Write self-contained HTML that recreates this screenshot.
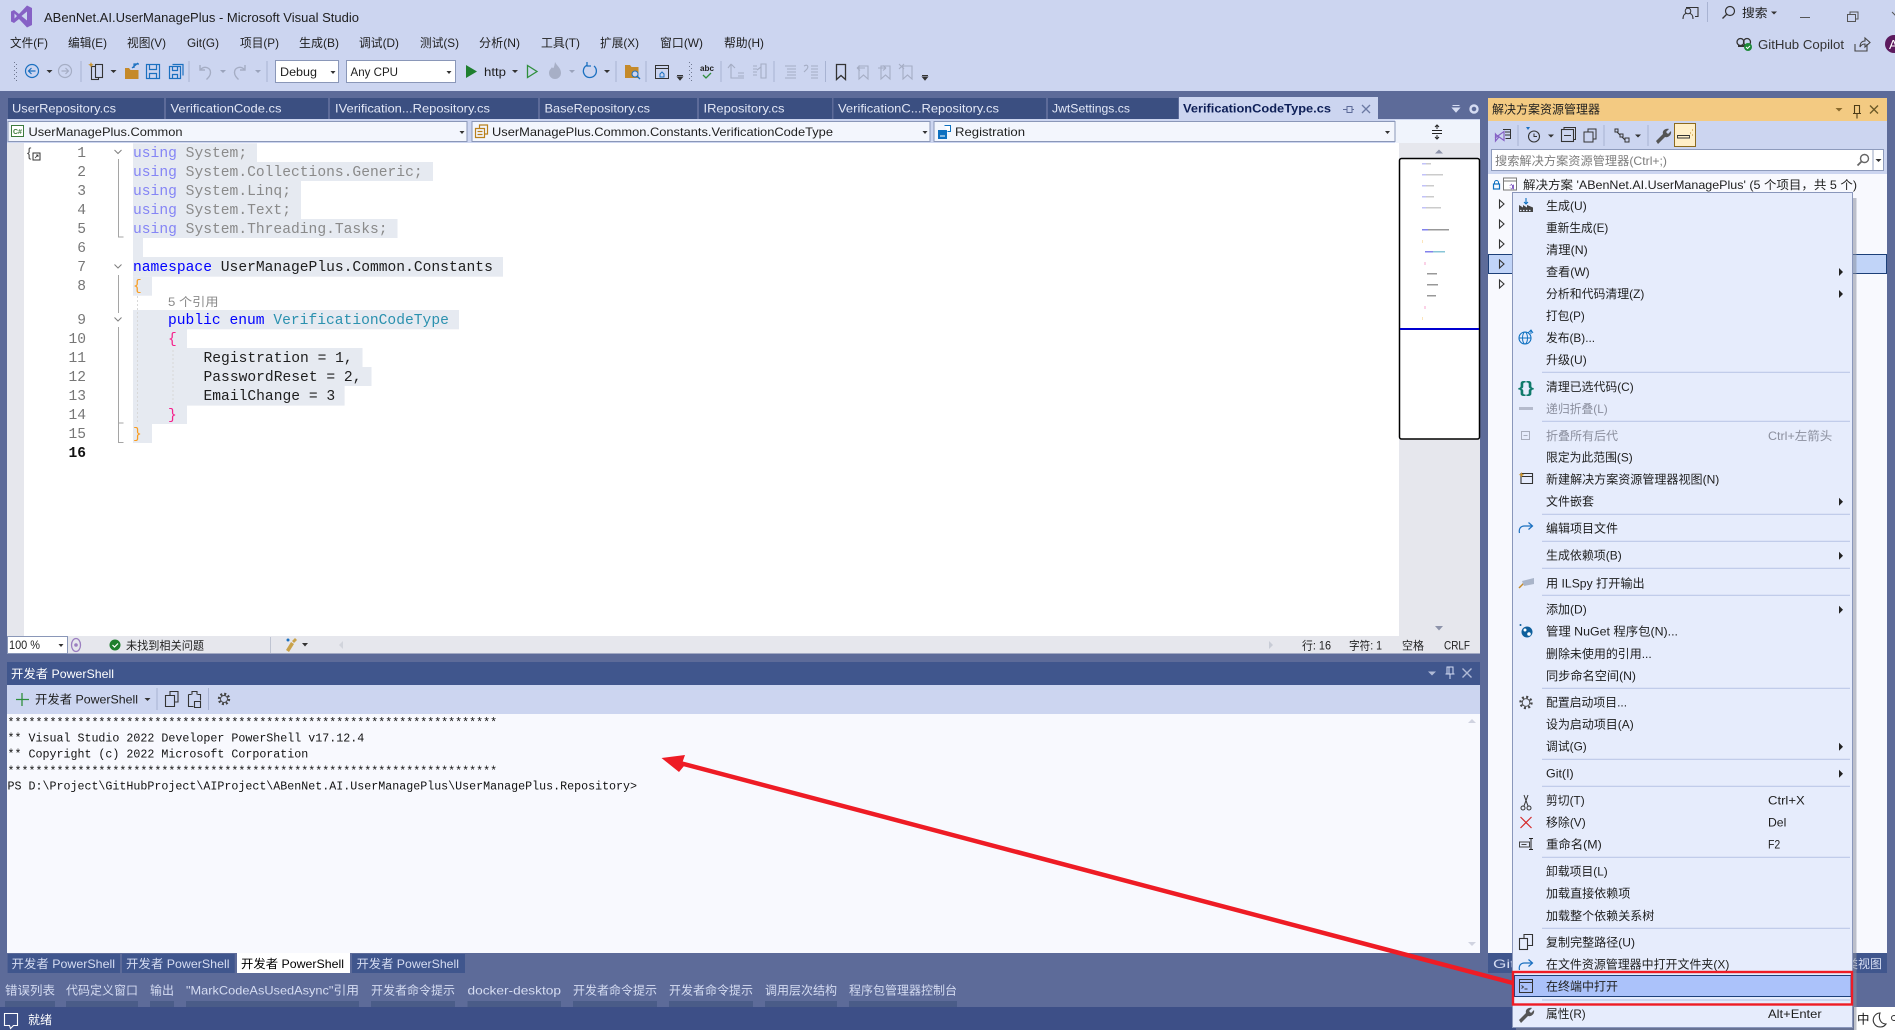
<!DOCTYPE html>
<html lang="zh"><head><meta charset="utf-8"><title>ABenNet.AI.UserManagePlus - Microsoft Visual Studio</title>
<style>
html,body{margin:0;padding:0;background:#5D6B99;overflow:hidden}
svg{display:block;font-family:"Liberation Sans","Noto Sans CJK SC",sans-serif;font-size:12px;fill:#1e1e1e}
.mono{font-family:"Liberation Mono","Noto Sans CJK SC",monospace}
.c{font-size:14.63px}.t{font-size:11.67px;fill:#111}
.ln{font-size:14.6px;fill:#777;text-anchor:end}
.k{fill:#8585f5}.g{fill:#8a8a8a}.b{fill:#0000ff}
.tab{fill:#e3e8f7}.dis{fill:#8b8f9e}
.wh{fill:#fff}.lt{fill:#d5dcf2}
.s{fill:none;stroke-width:1.2}
</style></head><body>
<svg width="1895" height="1030" viewBox="0 0 1895 1030" xmlns="http://www.w3.org/2000/svg">
<!-- base -->
<rect width="1895" height="1030" fill="#5D6B99"/>
<rect width="1895" height="91" fill="#CCD5F0"/>
<path fill="#8661C5" fill-rule="evenodd" d="M11 11.500l3-1.500 5 4 8-8.500 5 2.500v17l-5 2.500-8-8.500-5 4-3-1.500zM14.500 13.500v5l2.500-2.500zM27 11.500l-5.500 4.500 5.500 4.500z"/>
<text x="44" y="22" textLength="315" lengthAdjust="spacingAndGlyphs" font-size="12.500">ABenNet.AI.UserManagePlus - Microsoft Visual Studio</text>
<!-- menu -->
<g>
<text x="10" y="47" textLength="38" lengthAdjust="spacingAndGlyphs">文件(F)</text>
<text x="68" y="47" textLength="39" lengthAdjust="spacingAndGlyphs">编辑(E)</text>
<text x="127" y="47" textLength="39" lengthAdjust="spacingAndGlyphs">视图(V)</text>
<text x="187" y="47" textLength="32" lengthAdjust="spacingAndGlyphs">Git(G)</text>
<text x="240" y="47" textLength="39" lengthAdjust="spacingAndGlyphs">项目(P)</text>
<text x="299" y="47" textLength="40" lengthAdjust="spacingAndGlyphs">生成(B)</text>
<text x="359" y="47" textLength="40" lengthAdjust="spacingAndGlyphs">调试(D)</text>
<text x="420" y="47" textLength="39" lengthAdjust="spacingAndGlyphs">测试(S)</text>
<text x="479" y="47" textLength="41" lengthAdjust="spacingAndGlyphs">分析(N)</text>
<text x="541" y="47" textLength="39" lengthAdjust="spacingAndGlyphs">工具(T)</text>
<text x="600" y="47" textLength="39" lengthAdjust="spacingAndGlyphs">扩展(X)</text>
<text x="660" y="47" textLength="43" lengthAdjust="spacingAndGlyphs">窗口(W)</text>
<text x="724" y="47" textLength="40" lengthAdjust="spacingAndGlyphs">帮助(H)</text>
</g>
<!-- toolbar -->
<g fill="none" stroke="#A8B3D2">
<path d="M81 61v21M189 61v21M267 61v21M616 61v21M646 61v21M721 61v21M774 61v21M825.500 61v21"/>
</g>
<g fill="#6f7890">
<rect x="14" y="62" width="1" height="1"/><rect x="16" y="64" width="1" height="1"/><rect x="14" y="66" width="1" height="1"/><rect x="16" y="68" width="1" height="1"/><rect x="14" y="70" width="1" height="1"/><rect x="16" y="72" width="1" height="1"/><rect x="14" y="74" width="1" height="1"/><rect x="16" y="76" width="1" height="1"/><rect x="14" y="78" width="1" height="1"/><rect x="16" y="80" width="1" height="1"/>
<rect x="689" y="62" width="1" height="1"/><rect x="691" y="64" width="1" height="1"/><rect x="689" y="66" width="1" height="1"/><rect x="691" y="68" width="1" height="1"/><rect x="689" y="70" width="1" height="1"/><rect x="691" y="72" width="1" height="1"/><rect x="689" y="74" width="1" height="1"/><rect x="691" y="76" width="1" height="1"/><rect x="689" y="78" width="1" height="1"/><rect x="691" y="80" width="1" height="1"/>
</g>
<circle cx="32" cy="71" r="6.500" fill="none" stroke="#1b70c0" stroke-width="1.200"/><path d="M35.500 71h-6.500M31.500 68l-3 3 3 3" fill="none" stroke="#1b70c0" stroke-width="1.200"/>
<circle cx="65" cy="71" r="6.500" fill="none" stroke="#a5adc4" stroke-width="1.200"/><path d="M61.500 71h6.500M65.500 68l3 3-3 3" fill="none" stroke="#a5adc4" stroke-width="1.200"/>
<g fill="#333">
<path d="M46.500 70h6l-3 3zM110.500 70h6l-3 3zM512 70h6l-3 3zM604 70h6l-3 3z"/>
</g>
<g fill="#9aa3bc"><path d="M220 70h6l-3 3zM255 70h6l-3 3zM569 70h6l-3 3z"/></g>
<g fill="none" stroke="#333" stroke-width="1.100"><rect x="91.500" y="66.500" width="7" height="13"/><rect x="95.500" y="64.500" width="7" height="13" fill="#CCD5F0"/></g>
<path d="M91 62l.8 2 2 .8-2 .8-.8 2-.8-2-2-.8 2-.8z" fill="#c8912a"/>
<path d="M125 68h4l1.500 2h8v9h-13.500z" fill="#c58a2a"/><path d="M134 68v-4h4M135 64l4 0M132 68l6-5" fill="none" stroke="#1b70c0" stroke-width="1.200"/>
<g fill="none" stroke="#1b70c0" stroke-width="1.200"><rect x="146.500" y="64.500" width="13" height="14"/><path d="M149.500 64.500v5h7v-5M149.500 78.500v-5h7v5"/>
<rect x="169.500" y="66.500" width="11" height="12"/><path d="M172.500 66.500v4h5v-4M172.500 78.500v-4h5v4M172.500 64.500h10.500v11"/></g>
<g fill="none" stroke="#a5adc4" stroke-width="1.400"><path d="M200 65v5h5M200.500 69.500c4-4 10-2 10 3 0 3-2 5-4 7"/><path d="M245 65v5h-5M244.500 69.500c-4-4-10-2-10 3 0 3 2 5 4 7"/></g>
<rect x="275.500" y="60.500" width="63" height="22" fill="#fff" stroke="#8a97b8"/>
<text x="280" y="76" textLength="37" lengthAdjust="spacingAndGlyphs">Debug</text>
<rect x="346.500" y="60.500" width="109" height="22" fill="#fff" stroke="#8a97b8"/>
<text x="350.500" y="76" textLength="47.500" lengthAdjust="spacingAndGlyphs">Any CPU</text>
<path d="M330.500 71h5l-2.500 3zM446.500 71h5l-2.500 3z" fill="#333"/>
<polygon points="466,65 477,71.500 466,78" fill="#1e7f2e"/>
<text x="484" y="76" textLength="22" lengthAdjust="spacingAndGlyphs">http</text>
<polygon points="527.500,65.500 537,71.500 527.500,77.500" fill="none" stroke="#2f8f3c" stroke-width="1.300"/>
<path d="M555 62c2 4 6 6 6 11a6 6 0 0 1-12 0c0-3 2-4 3-6 1 2 2 2 3-5z" fill="#a7afc6"/>
<path d="M594 66a6.500 6.500 0 1 1-7-.8M587 62v4h4" fill="none" stroke="#1b70c0" stroke-width="1.300"/>
<path d="M625 65h5l1.500 2h7v11h-13.500z" fill="#c58a2a"/><circle cx="635" cy="74" r="3" fill="#CCD5F0" stroke="#1b70c0"/><path d="M637 76l3 3" stroke="#1b70c0" stroke-width="1.300"/>
<rect x="655.500" y="65.500" width="13" height="13" fill="none" stroke="#333"/><path d="M655.500 68.500h13" stroke="#333"/><path d="M660 74l2-2 2 2v3h-4z" fill="none" stroke="#1b70c0"/>
<path d="M677 75.500h6M677.500 77h5l-2.500 3z" stroke="#333" stroke-width="1" fill="#333"/>
<text x="700" y="71" font-size="8.500" textLength="14" lengthAdjust="spacingAndGlyphs" font-weight="bold">abc</text><path d="M703 75l3 3 5-5" fill="none" stroke="#2f8f3c" stroke-width="1.300"/>
<g fill="none" stroke="#a5adc4" stroke-width="1.100"><path d="M731 64v14h13M731 64l4 4M731 64l-3 4M738 73h6M738 76h6"/><path d="M753 66h4M753 69h4M753 72h4M753 75h4M761 64v14h5v-14zM757 70l4-3"/><path d="M785 66h11M787 69h9M787 72h9M787 75h9M785 78h11"/><path d="M811 66h7M811 69h7M811 72h7M811 75h7M811 78h7M804 66c3-2 5 0 3 3l-3 3"/></g>
<path d="M836.500 64.500h9v15l-4.500-4-4.500 4z" fill="none" stroke="#333" stroke-width="1.300"/>
<g fill="none" stroke="#a5adc4" stroke-width="1.100"><path d="M859 66h9v13l-4.500-4-4.500 4zM865 68h-8M857 68l3-2.500M857 68l3 2.500"/><path d="M881 66h9v13l-4.500-4-4.500 4zM878 68h8M886 68l-3-2.500M886 68l-3 2.500"/><path d="M903 66h9v13l-4.500-4-4.500 4zM899 64l5 5M904 64l-5 5"/></g>
<path d="M922 75.500h6M922.500 77h5l-2.500 3z" stroke="#333" stroke-width="1" fill="#333"/>
<!-- top right -->
<path d="M1686 7.500h12v9h-3M1683 19c0-4 2-6 5-6s5 2 5 6M1688 7.500v3" fill="none" stroke="#333" stroke-width="1.100"/><circle cx="1688" cy="11" r="2.800" fill="#CCD5F0" stroke="#333"/>
<path d="M1707.500 2v20" stroke="#A8B3D2"/>
<circle cx="1730" cy="11" r="4.500" fill="none" stroke="#333" stroke-width="1.200"/><path d="M1726.500 14.500l-4 4" stroke="#333" stroke-width="1.300"/>
<text x="1742" y="17" textLength="25.500" lengthAdjust="spacingAndGlyphs">搜索</text>
<path d="M1771 11.500h6l-3 3z" fill="#333"/>
<path d="M1800 17.500h10" stroke="#555"/><path d="M1847.500 14.500h8v7h-8zM1850 14.500v-2.500h8v7h-2.500" fill="none" stroke="#555"/>
<path d="M1892 12l8 8" stroke="#555"/>
<circle cx="1740.500" cy="42" r="3.500" fill="none" stroke="#333" stroke-width="1.300"/><circle cx="1747" cy="42" r="3.500" fill="none" stroke="#333" stroke-width="1.300"/><path d="M1738 46h10" stroke="#333" stroke-width="2"/>
<circle cx="1748" cy="47" r="4" fill="#1e8a3a"/><path d="M1746 47l1.500 1.500 2.500-2.500" fill="none" stroke="#fff"/>
<text x="1758" y="49" textLength="86" lengthAdjust="spacingAndGlyphs" font-size="12.500" fill="#333">GitHub Copilot</text>
<path d="M1855 44v7h12v-7M1860 47c0-4 2-6 5-6v-3l5 4.500-5 4.500v-3c-2 0-4 1-5 3z" fill="none" stroke="#444" stroke-width="1.100"/>
<circle cx="1894" cy="44" r="9" fill="#5c1a5e"/><text x="1889" y="49" font-size="13" fill="#fff">A</text>
<!-- tabs -->
<g fill="#3B4F81">
<rect x="8" y="98" width="156" height="21"/><rect x="166" y="98" width="162" height="21"/><rect x="330" y="98" width="208" height="21"/><rect x="540" y="98" width="157" height="21"/><rect x="699" y="98" width="133" height="21"/><rect x="833.500" y="98" width="212.500" height="21"/><rect x="1048" y="98" width="130" height="21"/>
</g>
<g class="tab">
<text class="tab" x="12" y="112.500" textLength="104" lengthAdjust="spacingAndGlyphs">UserRepository.cs</text>
<text class="tab" x="170.500" y="112.500" textLength="111" lengthAdjust="spacingAndGlyphs">VerificationCode.cs</text>
<text class="tab" x="335" y="112.500" textLength="155" lengthAdjust="spacingAndGlyphs">IVerification...Repository.cs</text>
<text class="tab" x="544.500" y="112.500" textLength="105.500" lengthAdjust="spacingAndGlyphs">BaseRepository.cs</text>
<text class="tab" x="703.500" y="112.500" textLength="81" lengthAdjust="spacingAndGlyphs">IRepository.cs</text>
<text class="tab" x="838" y="112.500" textLength="161" lengthAdjust="spacingAndGlyphs">VerificationC...Repository.cs</text>
<text class="tab" x="1052" y="112.500" textLength="78" lengthAdjust="spacingAndGlyphs">JwtSettings.cs</text>
</g>
<rect x="1179" y="97" width="199" height="24" fill="#CCD5F0"/>
<text x="1183" y="112.500" textLength="148" lengthAdjust="spacingAndGlyphs" font-weight="bold" fill="#0E1F57">VerificationCodeType.cs</text>
<path d="M1343 109.500h4M1347 106.500h5v6h-5zM1352 109.500h2" fill="none" stroke="#5d6b99"/>
<path d="M1362 105l8 8M1370 105l-8 8" stroke="#6c7aa3" stroke-width="1.300"/>
<path d="M1452.500 105.500h7M1452.500 108h7l-3.500 4z" stroke="#d5dcf2" fill="#d5dcf2"/>
<circle cx="1474" cy="109" r="3.500" fill="none" stroke="#d5dcf2" stroke-width="2.400"/>
<!-- nav bar -->
<rect x="7" y="119" width="1473" height="24" fill="#CCD5F0"/>
<rect x="1395" y="120" width="85" height="23" fill="#F0F4FC"/>
<g fill="#F3F6FD" stroke="#8a97b8">
<rect x="8" y="121.500" width="459" height="20"/><rect x="472" y="121.500" width="458" height="20"/><rect x="934" y="121.500" width="461" height="20"/>
</g>
<rect x="11.500" y="125.500" width="12" height="11" fill="#fff" stroke="#3c7a3c"/><text x="13" y="134" font-size="7" font-weight="bold" fill="#3c7a3c">C#</text>
<text x="28.500" y="136" textLength="154" lengthAdjust="spacingAndGlyphs">UserManagePlus.Common</text>
<path d="M459.500 131h5l-2.500 3z" fill="#333"/>
<path d="M475.500 128.500h9v9h-9zM479.500 128.500v-3.500h8v9h-3M477.500 131.500h5M477.500 134.500h5" fill="none" stroke="#b9801c" stroke-width="1.200"/>
<text x="492" y="136" textLength="341" lengthAdjust="spacingAndGlyphs">UserManagePlus.Common.Constants.VerificationCodeType</text>
<path d="M922.500 131h5l-2.500 3z" fill="#333"/>
<rect x="938" y="130" width="9" height="9" fill="#0e70c0"/><path d="M940 136h5" stroke="#fff"/><path d="M944.500 125.500h6v6h-3" fill="#fff" stroke="#0e70c0"/>
<text x="955" y="136" textLength="70" lengthAdjust="spacingAndGlyphs">Registration</text>
<path d="M1385 131h5l-2.500 3z" fill="#333"/>
<path d="M1432 130.500h10M1432 133.500h10M1437 125v4M1437 135v4M1435 127l2-2 2 2M1435 137l2 2 2-2" fill="none" stroke="#222"/>
<!-- editor -->
<rect x="7" y="143" width="1392" height="493" fill="#fff"/>
<rect x="7" y="143" width="17" height="493" fill="#E6E7ED"/>
<rect x="1399" y="143" width="81" height="493" fill="#E6E7ED"/>
<g fill="#E6EAF1">
<rect x="133" y="143.300" width="124" height="18.700"/><rect x="133" y="162" width="300" height="19"/><rect x="133" y="181" width="168" height="19"/><rect x="133" y="200" width="168" height="19"/><rect x="133" y="219" width="264.500" height="19"/><rect x="133" y="238" width="10" height="19"/><rect x="133" y="257" width="370" height="19.700"/><rect x="133" y="276.700" width="19" height="19"/>
<rect x="133" y="310" width="326" height="19.300"/><rect x="133" y="329" width="54" height="19"/><rect x="133" y="348" width="229.500" height="19"/><rect x="133" y="367" width="238.500" height="19"/><rect x="133" y="386" width="211.600" height="19.600"/><rect x="133" y="405" width="54" height="19"/><rect x="133" y="424" width="19" height="19"/>
</g>
<g font-size="13" fill="#444"><text x="27" y="157">{</text></g>
<rect x="33" y="153" width="7" height="7" fill="#fff" stroke="#333"/><path d="M35 158l3-3M36 155h2v2" fill="none" stroke="#333" stroke-width=".8"/>
<g class="mono">
<text class="ln" x="86" y="157">1</text><text class="ln" x="86" y="176">2</text><text class="ln" x="86" y="195">3</text><text class="ln" x="86" y="214">4</text><text class="ln" x="86" y="233">5</text><text class="ln" x="86" y="252">6</text><text class="ln" x="86" y="271">7</text><text class="ln" x="86" y="290">8</text><text class="ln" x="86" y="324">9</text><text class="ln" x="86" y="343">10</text><text class="ln" x="86" y="362">11</text><text class="ln" x="86" y="381">12</text><text class="ln" x="86" y="400">13</text><text class="ln" x="86" y="419">14</text><text class="ln" x="86" y="438">15</text><text class="ln" x="86" y="457" style="fill:#111;font-weight:bold">16</text>
<text class="c" x="133" y="157"><tspan class="k">using</tspan><tspan class="g"> System;</tspan></text>
<text class="c" x="133" y="176"><tspan class="k">using</tspan><tspan class="g"> System.Collections.Generic;</tspan></text>
<text class="c" x="133" y="195"><tspan class="k">using</tspan><tspan class="g"> System.Linq;</tspan></text>
<text class="c" x="133" y="214"><tspan class="k">using</tspan><tspan class="g"> System.Text;</tspan></text>
<text class="c" x="133" y="233"><tspan class="k">using</tspan><tspan class="g"> System.Threading.Tasks;</tspan></text>
<text class="c" x="133" y="271"><tspan class="b">namespace</tspan><tspan> UserManagePlus.Common.Constants</tspan></text>
<text class="c" x="133" y="290" fill="#F99C1F">{</text>
<text class="c" x="168" y="324"><tspan class="b">public</tspan> <tspan class="b">enum</tspan> <tspan fill="#2B91AF">VerificationCodeType</tspan></text>
<text class="c" x="168" y="343" fill="#F5218C">{</text>
<text class="c" x="203.500" y="362">Registration = 1,</text>
<text class="c" x="203.500" y="381">PasswordReset = 2,</text>
<text class="c" x="203.500" y="400">EmailChange = 3</text>
<text class="c" x="168" y="419" fill="#F5218C">}</text>
<text class="c" x="133" y="438" fill="#F99C1F">}</text>
</g>
<text x="168" y="306" textLength="50.500" lengthAdjust="spacingAndGlyphs" fill="#8a8a8a">5 个引用</text>
<g fill="none" stroke="#7f7f7f" stroke-width="1"><path d="M114.500 150l3.500 3.500 3.500-3.500M114.500 264.500l3.500 3.500 3.500-3.500M114.500 317.500l3.500 3.500 3.500-3.500"/></g>
<g fill="none" stroke="#a5a5a5" stroke-width="1"><path d="M118.500 159v78h5M118.500 275v38M118.500 327v96h5M118.500 423v19.500h5"/></g>
<g fill="none" stroke="#d8d8d8" stroke-dasharray="2 2"><path d="M137.500 296v127M173 350v55"/></g>
<!-- minimap -->
<path d="M1435 153.500l4-4 4 4z" fill="#8d93aa"/>
<rect x="1399.500" y="158.500" width="80" height="280.500" rx="2" fill="#fff" stroke="#000" stroke-width="1.500"/>
<g opacity=".6"><rect x="1422" y="163" width="4" height="1.500" fill="#9a9af5"/><rect x="1426" y="163" width="5" height="1.500" fill="#aaa"/>
<rect x="1422" y="174" width="4" height="1.500" fill="#9a9af5"/><rect x="1426" y="174" width="17" height="1.500" fill="#aaa"/>
<rect x="1422" y="185" width="4" height="1.500" fill="#9a9af5"/><rect x="1426" y="185" width="8" height="1.500" fill="#aaa"/>
<rect x="1422" y="196" width="4" height="1.500" fill="#9a9af5"/><rect x="1426" y="196" width="8" height="1.500" fill="#aaa"/>
<rect x="1422" y="207" width="4" height="1.500" fill="#9a9af5"/><rect x="1426" y="207" width="15" height="1.500" fill="#aaa"/>
<rect x="1422" y="229" width="6" height="1.500" fill="#3030e0"/><rect x="1428" y="229" width="21" height="1.500" fill="#555"/>
<rect x="1422" y="240" width="1" height="3" fill="#fbd48f"/>
<rect x="1425" y="251" width="8" height="1.500" fill="#3030e0"/><rect x="1433" y="251" width="12" height="1.500" fill="#3aa0bd"/>
<rect x="1424" y="262" width="2" height="3" fill="#f9b5d8"/>
<rect x="1427" y="273" width="10" height="1.500" fill="#555"/><rect x="1427" y="284" width="11" height="1.500" fill="#555"/><rect x="1427" y="295" width="9" height="1.500" fill="#555"/>
<rect x="1424" y="306" width="2" height="3" fill="#f9b5d8"/><rect x="1422" y="317" width="1" height="3" fill="#fbd48f"/></g>
<rect x="1400" y="328" width="79" height="2" fill="#0000d0"/>
<path d="M1435 626h8l-4 4.500z" fill="#8d93aa"/>
<!-- status -->
<rect x="7" y="636" width="1473" height="17.500" fill="#E6E7ED"/>
<rect x="7.500" y="636.500" width="60" height="17" fill="#fff" stroke="#8a97b8"/>
<text x="9" y="649" textLength="31" lengthAdjust="spacingAndGlyphs" font-size="11.500">100 %</text>
<path d="M58.500 644h5l-2.500 3z" fill="#333"/>
<ellipse cx="76" cy="645" rx="4.500" ry="6.500" fill="none" stroke="#9b7fc0" stroke-width="1.300"/><circle cx="76" cy="645" r="1.800" fill="#9b7fc0"/>
<circle cx="115" cy="645" r="5.500" fill="#1e7f2e"/><path d="M112.500 645l2 2 3.500-3.500" fill="none" stroke="#fff" stroke-width="1.200"/>
<text x="126" y="649.500" textLength="78" lengthAdjust="spacingAndGlyphs" font-size="11.500">未找到相关问题</text>
<path d="M270.500 637v16" stroke="#bfc4d2"/>
<path d="M286 650l5-8 3 2-5 8zM292 641l3-3 2 2-3 3z" fill="#c9a24a"/><circle cx="288" cy="640" r="1.500" fill="#1b70c0"/>
<path d="M302 643h6l-3 3.500z" fill="#333"/>
<path d="M343 641v8l-4-4z" fill="#d1d4dc"/><path d="M1269 641v8l4-4z" fill="#c8ccd6"/>
<text x="1302" y="649.500" textLength="29" lengthAdjust="spacingAndGlyphs" font-size="11.500">行: 16</text>
<text x="1349" y="649.500" textLength="33" lengthAdjust="spacingAndGlyphs" font-size="11.500">字符: 1</text>
<text x="1402" y="649.500" textLength="22" lengthAdjust="spacingAndGlyphs" font-size="11.500">空格</text>
<text x="1444" y="649.500" textLength="26" lengthAdjust="spacingAndGlyphs" font-size="11.500">CRLF</text>
<!-- powershell panel -->
<rect x="7" y="662" width="1473" height="23" fill="#40568D"/>
<text class="wh" x="11" y="678" textLength="103" lengthAdjust="spacingAndGlyphs">开发者 PowerShell</text>
<path d="M1428 671.500h8l-4 4z" fill="#b0bad6"/>
<path d="M1447 667h6v7h-6zM1445.500 674h9M1450 674v5M1449 667v7" fill="none" stroke="#d5dcf2"/>
<path d="M1462.500 668.500l9 9M1471.500 668.500l-9 9" stroke="#b0bad6" stroke-width="1.400"/>
<rect x="7" y="685" width="1473" height="29" fill="#CCD5F0"/>
<path d="M22 693v13M16 699.500h13" stroke="#2f8f3c" stroke-width="1.300"/>
<text x="35" y="703.500" textLength="103" lengthAdjust="spacingAndGlyphs">开发者 PowerShell</text>
<path d="M144.500 698h6l-3 3z" fill="#333"/>
<path d="M157 688v22M208.500 688v22" stroke="#A8B3D2"/>
<path d="M165.500 695.500h9v11h-9zM170 695v-3.500h8v10.500h-3.500" fill="none" stroke="#333" stroke-width="1.100"/>
<path d="M188.500 694.500h3m6 0h3v6M188.500 694.500v12h5M192 694.500v-3h5v3M194.500 701.500h6v6h-6z" fill="none" stroke="#333" stroke-width="1.100"/>
<circle cx="224" cy="699" r="5" fill="none" stroke="#444" stroke-width="2.400" stroke-dasharray="2 1.930"/><circle cx="224" cy="699" r="3.500" fill="none" stroke="#444" stroke-width=".9"/>
<rect x="7" y="714" width="1473" height="239" fill="#F8F9FE"/>
<g class="mono">
<text class="t" x="7.500" y="726">**********************************************************************</text>
<text class="t" x="7.500" y="741.500">** Visual Studio 2022 Developer PowerShell v17.12.4</text>
<text class="t" x="7.500" y="757.500">** Copyright (c) 2022 Microsoft Corporation</text>
<text class="t" x="7.500" y="774.500">**********************************************************************</text>
<text class="t" x="7.500" y="789.500">PS D:\Project\GitHubProject\AIProject\ABenNet.AI.UserManagePlus\UserManagePlus.Repository&gt;</text>
</g>
<path d="M1468 723l4-4 4 4zM1468 942h8l-4 4z" fill="#d0d3e0"/>
<!-- bottom tabs -->
<g fill="#40568D"><rect x="7.600" y="954" width="112.400" height="19"/><rect x="122" y="954" width="112.700" height="19"/><rect x="352" y="954" width="113" height="19"/></g>
<rect x="237" y="953" width="113" height="20" fill="#fff"/>
<text class="lt" x="11.500" y="968" textLength="103.500" lengthAdjust="spacingAndGlyphs">开发者 PowerShell</text>
<text class="lt" x="126" y="968" textLength="103.500" lengthAdjust="spacingAndGlyphs">开发者 PowerShell</text>
<text x="241" y="968" textLength="103" lengthAdjust="spacingAndGlyphs" fill="#000">开发者 PowerShell</text>
<text class="lt" x="356.500" y="968" textLength="102.500" lengthAdjust="spacingAndGlyphs">开发者 PowerShell</text>
<!-- autohide -->
<g class="lt">
<text class="lt" x="5" y="994.500" textLength="50" lengthAdjust="spacingAndGlyphs">错误列表</text>
<text class="lt" x="66" y="994.500" textLength="72" lengthAdjust="spacingAndGlyphs">代码定义窗口</text>
<text class="lt" x="150" y="994.500" textLength="24" lengthAdjust="spacingAndGlyphs">输出</text>
<text class="lt" x="186" y="994.500" textLength="173" lengthAdjust="spacingAndGlyphs">"MarkCodeAsUsedAsync"引用</text>
<text class="lt" x="371" y="994.500" textLength="84" lengthAdjust="spacingAndGlyphs">开发者命令提示</text>
<text class="lt" x="467.500" y="994.500" textLength="93.500" lengthAdjust="spacingAndGlyphs">docker-desktop</text>
<text class="lt" x="573" y="994.500" textLength="84" lengthAdjust="spacingAndGlyphs">开发者命令提示</text>
<text class="lt" x="669" y="994.500" textLength="84" lengthAdjust="spacingAndGlyphs">开发者命令提示</text>
<text class="lt" x="765" y="994.500" textLength="72" lengthAdjust="spacingAndGlyphs">调用层次结构</text>
<text class="lt" x="849" y="994.500" textLength="108" lengthAdjust="spacingAndGlyphs">程序包管理器控制台</text>
</g>
<g fill="#4A5C88"><rect x="5" y="1001" width="50" height="6"/><rect x="66" y="1001" width="72" height="6"/><rect x="150" y="1001" width="24" height="6"/><rect x="186" y="1001" width="173" height="6"/><rect x="371" y="1001" width="84" height="6"/><rect x="467.500" y="1001" width="93.500" height="6"/><rect x="573" y="1001" width="84" height="6"/><rect x="669" y="1001" width="84" height="6"/><rect x="765" y="1001" width="72" height="6"/><rect x="849" y="1001" width="108" height="6"/></g>
<rect x="0" y="1007" width="1895" height="23" fill="#3D4F87"/>
<path d="M4.500 1013.500h13v12h-4l-3 3-1-3h-5z" fill="none" stroke="#fff" stroke-width="1.100"/>
<text class="wh" x="28" y="1024" textLength="24" lengthAdjust="spacingAndGlyphs">就绪</text>
<rect x="1854" y="1007" width="41" height="23" fill="#fff"/>
<text x="1857" y="1023.500" font-size="12.500" fill="#111">中</text>
<path d="M1880 1013a7 7 0 1 0 6 11c-5 0-8-5-6-11z" fill="none" stroke="#333" stroke-width="1.100"/>
<circle cx="1894" cy="1018" r="2.500" fill="none" stroke="#333"/>
<!-- solution explorer -->
<rect x="1488" y="98" width="399" height="23" fill="#F3CA82"/>
<text x="1492" y="113.500" textLength="108" lengthAdjust="spacingAndGlyphs">解决方案资源管理器</text>
<path d="M1835.500 108h7l-3.500 3.500z" fill="#8a6a2c"/>
<path d="M1854.500 105.500h5v8h-5zM1853 113.500h8M1857 113.500v5" fill="none" stroke="#4d3c18" stroke-width="1.100"/>
<path d="M1870 105.500l8 8M1878 105.500l-8 8" stroke="#6d5a28" stroke-width="1.400"/>
<rect x="1488" y="121" width="399" height="53" fill="#CCD5F0"/>
<path d="M1495.500 134l3 3.500-3 3.500zM1495 134l9 6.500v-9l-9 6.500" fill="none" stroke="#8661C5" stroke-width="1.200"/>
<path d="M1505.500 129.500h5v9h-5" fill="#CCD5F0" stroke="#333"/><path d="M1503 129.500h8M1505 132h5M1505 135h5" stroke="#333" fill="none"/>
<path d="M1518 125v21M1604 125v21M1648 125v21" stroke="#A8B3D2"/>
<circle cx="1534" cy="136.500" r="5.500" fill="none" stroke="#333" stroke-width="1.100"/><path d="M1534 133.500v3h3" fill="none" stroke="#333"/>
<path d="M1526 127h4l-2 3z" fill="#1b70c0"/>
<path d="M1548 134.500h6l-3 3zM1635 134.500h6l-3 3z" fill="#333"/>
<rect x="1561.500" y="129.500" width="12" height="12" fill="none" stroke="#333" stroke-width="1.100"/><path d="M1564 135.500h7M1564 129v-1.500h11.500v12h-2" fill="none" stroke="#333"/>
<rect x="1584" y="132" width="9" height="10" fill="none" stroke="#333"/><path d="M1588 132v-3h8v10h-3" fill="none" stroke="#333"/>
<path d="M1615 129h3v3h-3zM1620 134h3v3h-3zM1625 138h4v4h-4zM1617 132l3 3M1622 137l3 3" fill="none" stroke="#333"/>
<path d="M1656 141l7-7c-1-3 2-6 6-5l-3 3 2 2 3-3c1 4-3 7-6 6l-7 7z" fill="#555"/>
<rect x="1674.500" y="123.500" width="21" height="23" fill="#FFEFC8" stroke="#8c6a1e"/>
<path d="M1677.500 135.500h12v2.500h-12z" fill="none" stroke="#333" stroke-width=".9"/><path d="M1690 133h1M1692 130h1M1692 135h1" stroke="#c08a20" stroke-width="1"/>
<rect x="1491.500" y="149.500" width="392" height="21" fill="#fff" stroke="#8e9bbc"/>
<path d="M1873 150v20" stroke="#9aa5c1"/>
<text x="1495" y="165" textLength="172" lengthAdjust="spacingAndGlyphs" fill="#7d7d7d">搜索解决方案资源管理器(Ctrl+;)</text>
<circle cx="1864.500" cy="158.500" r="4" fill="none" stroke="#666" stroke-width="1.400"/><path d="M1861.500 161.500l-4 4" stroke="#666" stroke-width="1.800"/>
<path d="M1875.500 159h6l-3 3z" fill="#333"/>
<rect x="1488" y="174" width="399" height="779" fill="#F8F9FE"/>
<rect x="1488.500" y="254.500" width="398" height="19" fill="#C1D4F8" stroke="#1C3F78"/>
<rect x="1493.500" y="184" width="6" height="5" fill="none" stroke="#0e70c0" stroke-width="1.200"/><path d="M1494.500 184v-1.500a2 2 0 0 1 4 0v1.500" fill="none" stroke="#0e70c0"/>
<rect x="1503.500" y="178" width="13" height="12" fill="#fff" stroke="#777"/><path d="M1503.500 181h13" stroke="#777"/><path d="M1509 186l3-2.500v6l-3-2.500 5 2.500v-5z" fill="#8661C5"/>
<text x="1523" y="189" textLength="334" lengthAdjust="spacingAndGlyphs">解决方案 'ABenNet.AI.UserManagePlus' (5 个项目，共 5 个)</text>
<g fill="none" stroke="#333" stroke-width="1.100"><path d="M1499.500 200l4.500 4-4.500 4zM1499.500 220l4.500 4-4.500 4zM1499.500 240l4.500 4-4.500 4zM1499.500 260l4.500 4-4.500 4zM1499.500 280l4.500 4-4.500 4z"/></g>
<!-- right bottom tabs -->
<rect x="1488" y="953" width="399" height="20" fill="#40568D"/>
<text class="lt" x="1493" y="968" textLength="22" lengthAdjust="spacingAndGlyphs">Git</text>
<text class="lt" x="1846" y="968" textLength="36" lengthAdjust="spacingAndGlyphs">类视图</text>
<!-- context menu -->
<rect x="1516" y="198" width="340.500" height="832" fill="#8a8f9e" opacity=".55"/>
<rect x="1512.500" y="192.500" width="340" height="835" fill="#E6ECFC" stroke="#8A97BB"/>
<g stroke="#BCC8E8" stroke-width="1.200">
<path d="M1542 372.300h308M1542 421.300h308M1542 514.300h308M1542 541.300h308M1542 568.300h308M1542 595.300h308M1542 688.300h308M1542 759.300h308M1542 786.300h308M1542 857.300h308M1542 928.300h308M1542 1000h308"/>
</g>
<rect x="1514.500" y="975.500" width="336.500" height="21" fill="#ABC2FA" stroke="#1C3F78"/>
<g>
<text x="1546" y="210" textLength="40.700" lengthAdjust="spacingAndGlyphs">生成(U)</text>
<text x="1546" y="232" textLength="62.300" lengthAdjust="spacingAndGlyphs">重新生成(E)</text>
<text x="1546" y="254" textLength="41.700" lengthAdjust="spacingAndGlyphs">清理(N)</text>
<text x="1546" y="276" textLength="43.700" lengthAdjust="spacingAndGlyphs">查看(W)</text>
<text x="1546" y="298" textLength="98.300" lengthAdjust="spacingAndGlyphs">分析和代码清理(Z)</text>
<text x="1546" y="320" textLength="38.700" lengthAdjust="spacingAndGlyphs">打包(P)</text>
<text x="1546" y="342" textLength="49" lengthAdjust="spacingAndGlyphs">发布(B)...</text>
<text x="1546" y="364" textLength="40.700" lengthAdjust="spacingAndGlyphs">升级(U)</text>
<text x="1546" y="391" textLength="87.700" lengthAdjust="spacingAndGlyphs">清理已选代码(C)</text>
<text class="dis" x="1546" y="413" textLength="61.700" lengthAdjust="spacingAndGlyphs">递归折叠(L)</text>
<text class="dis" x="1546" y="440" textLength="72" lengthAdjust="spacingAndGlyphs">折叠所有后代</text>
<text class="dis" x="1768" y="440" textLength="64.300" lengthAdjust="spacingAndGlyphs">Ctrl+左箭头</text>
<text x="1546" y="461.700" textLength="86.700" lengthAdjust="spacingAndGlyphs">限定为此范围(S)</text>
<text x="1546" y="483.700" textLength="173.300" lengthAdjust="spacingAndGlyphs">新建解决方案资源管理器视图(N)</text>
<text x="1546" y="505.700" textLength="48" lengthAdjust="spacingAndGlyphs">文件嵌套</text>
<text x="1546" y="532.700" textLength="72" lengthAdjust="spacingAndGlyphs">编辑项目文件</text>
<text x="1546" y="559.700" textLength="75.700" lengthAdjust="spacingAndGlyphs">生成依赖项(B)</text>
<text x="1546" y="587.300" textLength="98.700" lengthAdjust="spacingAndGlyphs">用 ILSpy 打开输出</text>
<text x="1546" y="613.700" textLength="40.700" lengthAdjust="spacingAndGlyphs">添加(D)</text>
<text x="1546" y="635.700" textLength="132" lengthAdjust="spacingAndGlyphs">管理 NuGet 程序包(N)...</text>
<text x="1546" y="658" textLength="105.700" lengthAdjust="spacingAndGlyphs">删除未使用的引用...</text>
<text x="1546" y="680" textLength="90" lengthAdjust="spacingAndGlyphs">同步命名空间(N)</text>
<text x="1546" y="706.700" textLength="81" lengthAdjust="spacingAndGlyphs">配置启动项目...</text>
<text x="1546" y="728.700" textLength="87.700" lengthAdjust="spacingAndGlyphs">设为启动项目(A)</text>
<text x="1546" y="750.700" textLength="40.700" lengthAdjust="spacingAndGlyphs">调试(G)</text>
<text x="1546" y="777.700" textLength="27.700" lengthAdjust="spacingAndGlyphs">Git(I)</text>
<text x="1546" y="804.700" textLength="38.700" lengthAdjust="spacingAndGlyphs">剪切(T)</text>
<text x="1768" y="804.700" textLength="36.700" lengthAdjust="spacingAndGlyphs">Ctrl+X</text>
<text x="1546" y="826.700" textLength="39.700" lengthAdjust="spacingAndGlyphs">移除(V)</text>
<text x="1768" y="826.700" textLength="18.300" lengthAdjust="spacingAndGlyphs">Del</text>
<text x="1546" y="848.700" textLength="55.700" lengthAdjust="spacingAndGlyphs">重命名(M)</text>
<text x="1768" y="848.700" textLength="12.300" lengthAdjust="spacingAndGlyphs">F2</text>
<text x="1546" y="875.700" textLength="61.700" lengthAdjust="spacingAndGlyphs">卸载项目(L)</text>
<text x="1546" y="897.700" textLength="84.300" lengthAdjust="spacingAndGlyphs">加载直接依赖项</text>
<text x="1546" y="920" textLength="108.300" lengthAdjust="spacingAndGlyphs">加载整个依赖关系树</text>
<text x="1546" y="946.700" textLength="89" lengthAdjust="spacingAndGlyphs">复制完整路径(U)</text>
<text x="1546" y="968.700" textLength="183.300" lengthAdjust="spacingAndGlyphs">在文件资源管理器中打开文件夹(X)</text>
<text x="1546" y="990.700" textLength="72" lengthAdjust="spacingAndGlyphs">在终端中打开</text>
<text x="1546" y="1018" textLength="39.700" lengthAdjust="spacingAndGlyphs">属性(R)</text>
<text x="1768" y="1018" textLength="53.700" lengthAdjust="spacingAndGlyphs">Alt+Enter</text>
</g>
<g fill="#222"><path d="M1839 268l4 4-4 4zM1839 290l4 4-4 4zM1839 497.700l4 4-4 4zM1839 551.700l4 4-4 4zM1839 605.700l4 4-4 4zM1839 742.700l4 4-4 4zM1839 769.700l4 4-4 4z"/></g>
<!-- menu icons -->
<path d="M1519 212v-7l4 2.500v-2.500l4 2.500v-2.500l6 2.500v4.500z" fill="#444"/><path d="M1520 210.500h12" stroke="#E6ECFC" stroke-width="1.200" stroke-dasharray="1.500 1.500"/><path d="M1526 198v6M1524 202l2 2 2-2" fill="none" stroke="#0e70c0" stroke-width="1.100"/>
<circle cx="1525" cy="338" r="6" fill="none" stroke="#0e70c0" stroke-width="1.100"/><ellipse cx="1525" cy="338" rx="2.500" ry="6" fill="none" stroke="#0e70c0"/><path d="M1519 338h12M1528 333l3-3 2 3M1531 330v4" fill="none" stroke="#0e70c0"/>
<text x="1518" y="392.500" font-size="16" font-weight="bold" fill="#0f7a6a" textLength="16" lengthAdjust="spacingAndGlyphs">{}</text>
<rect x="1519" y="407" width="14" height="3" fill="#b4bacc"/>
<rect x="1521.500" y="431.500" width="8" height="8" fill="none" stroke="#a8adbc"/><path d="M1523.500 435.500h4" stroke="#a8adbc"/>
<path d="M1521 473.500h11.500v10h-11.500zM1521 476.500h11.500" fill="none" stroke="#333" stroke-width="1.100"/><path d="M1521.500 472l.8 2 2 .8-2 .8-.8 2-.8-2-2-.8 2-.8z" fill="#c8912a"/>
<path d="M1519.500 533c-1-4 1-7 5-7h8M1528.500 522.500l4 3.500-4 3.500" fill="none" stroke="#1b70c0" stroke-width="1.200"/>
<path d="M1519 588l6-6" stroke="#c58a2a" stroke-width="1.500"/><path d="M1522 581l12-3v6l-10 2z" fill="#a9b4c9"/>
<circle cx="1527" cy="632" r="5.500" fill="#0e5f9c"/><circle cx="1525" cy="630" r="1.500" fill="#fff"/><circle cx="1529" cy="634" r="1.800" fill="#fff"/><circle cx="1520.500" cy="625" r="1" fill="#0e5f9c"/>
<circle cx="1526" cy="702.500" r="5.500" fill="none" stroke="#444" stroke-width="2.400" stroke-dasharray="2 2.320"/><circle cx="1526" cy="702.500" r="3.800" fill="none" stroke="#444" stroke-width=".9"/>
<circle cx="1523" cy="808" r="2" fill="none" stroke="#333"/><circle cx="1529" cy="808" r="2" fill="none" stroke="#333"/><path d="M1524 806l4-11M1528 806l-4-11" stroke="#333"/>
<path d="M1520.500 817l11 11M1531.500 817l-11 11" stroke="#d42a2a" stroke-width="1.200"/>
<path d="M1519.500 842h10v5h-10zM1521.500 844.500h5" fill="none" stroke="#444"/><path d="M1531 838.500v11M1529 838.500h4M1529 849.500h4" stroke="#222" fill="none"/>
<rect x="1519.500" y="938.500" width="8" height="11" fill="none" stroke="#333" stroke-width="1.100"/><path d="M1524 938v-3.500h8.500v11h-4.500" fill="none" stroke="#333" stroke-width="1.100"/>
<path d="M1519.500 970c-1-4 1-7 5-7h8M1528.500 959.500l4 3.500-4 3.500" fill="none" stroke="#1b70c0" stroke-width="1.200"/>
<rect x="1519.500" y="979.500" width="13" height="13" fill="none" stroke="#333"/><path d="M1519.500 982.500h13M1521.500 985.500l2 1.500-2 1.500M1524.500 989h3" fill="none" stroke="#333" stroke-width=".9"/>
<path d="M1519 1020l7-7c-1-3 2-6 6-5l-3 3 2 2 3-3c1 4-3 7-6 6l-7 7z" fill="#555"/>
<!-- annotation -->
<rect x="1513" y="972" width="339" height="32.500" fill="none" stroke="#EE1C25" stroke-width="2.400"/>
<path d="M678 762.500L1513 983" stroke="#EE1C25" stroke-width="4.500" fill="none"/>
<polygon points="661.500,758 685,755 682,763.500 684,766 679,772" fill="#EE1C25"/>
</svg>
</body></html>
